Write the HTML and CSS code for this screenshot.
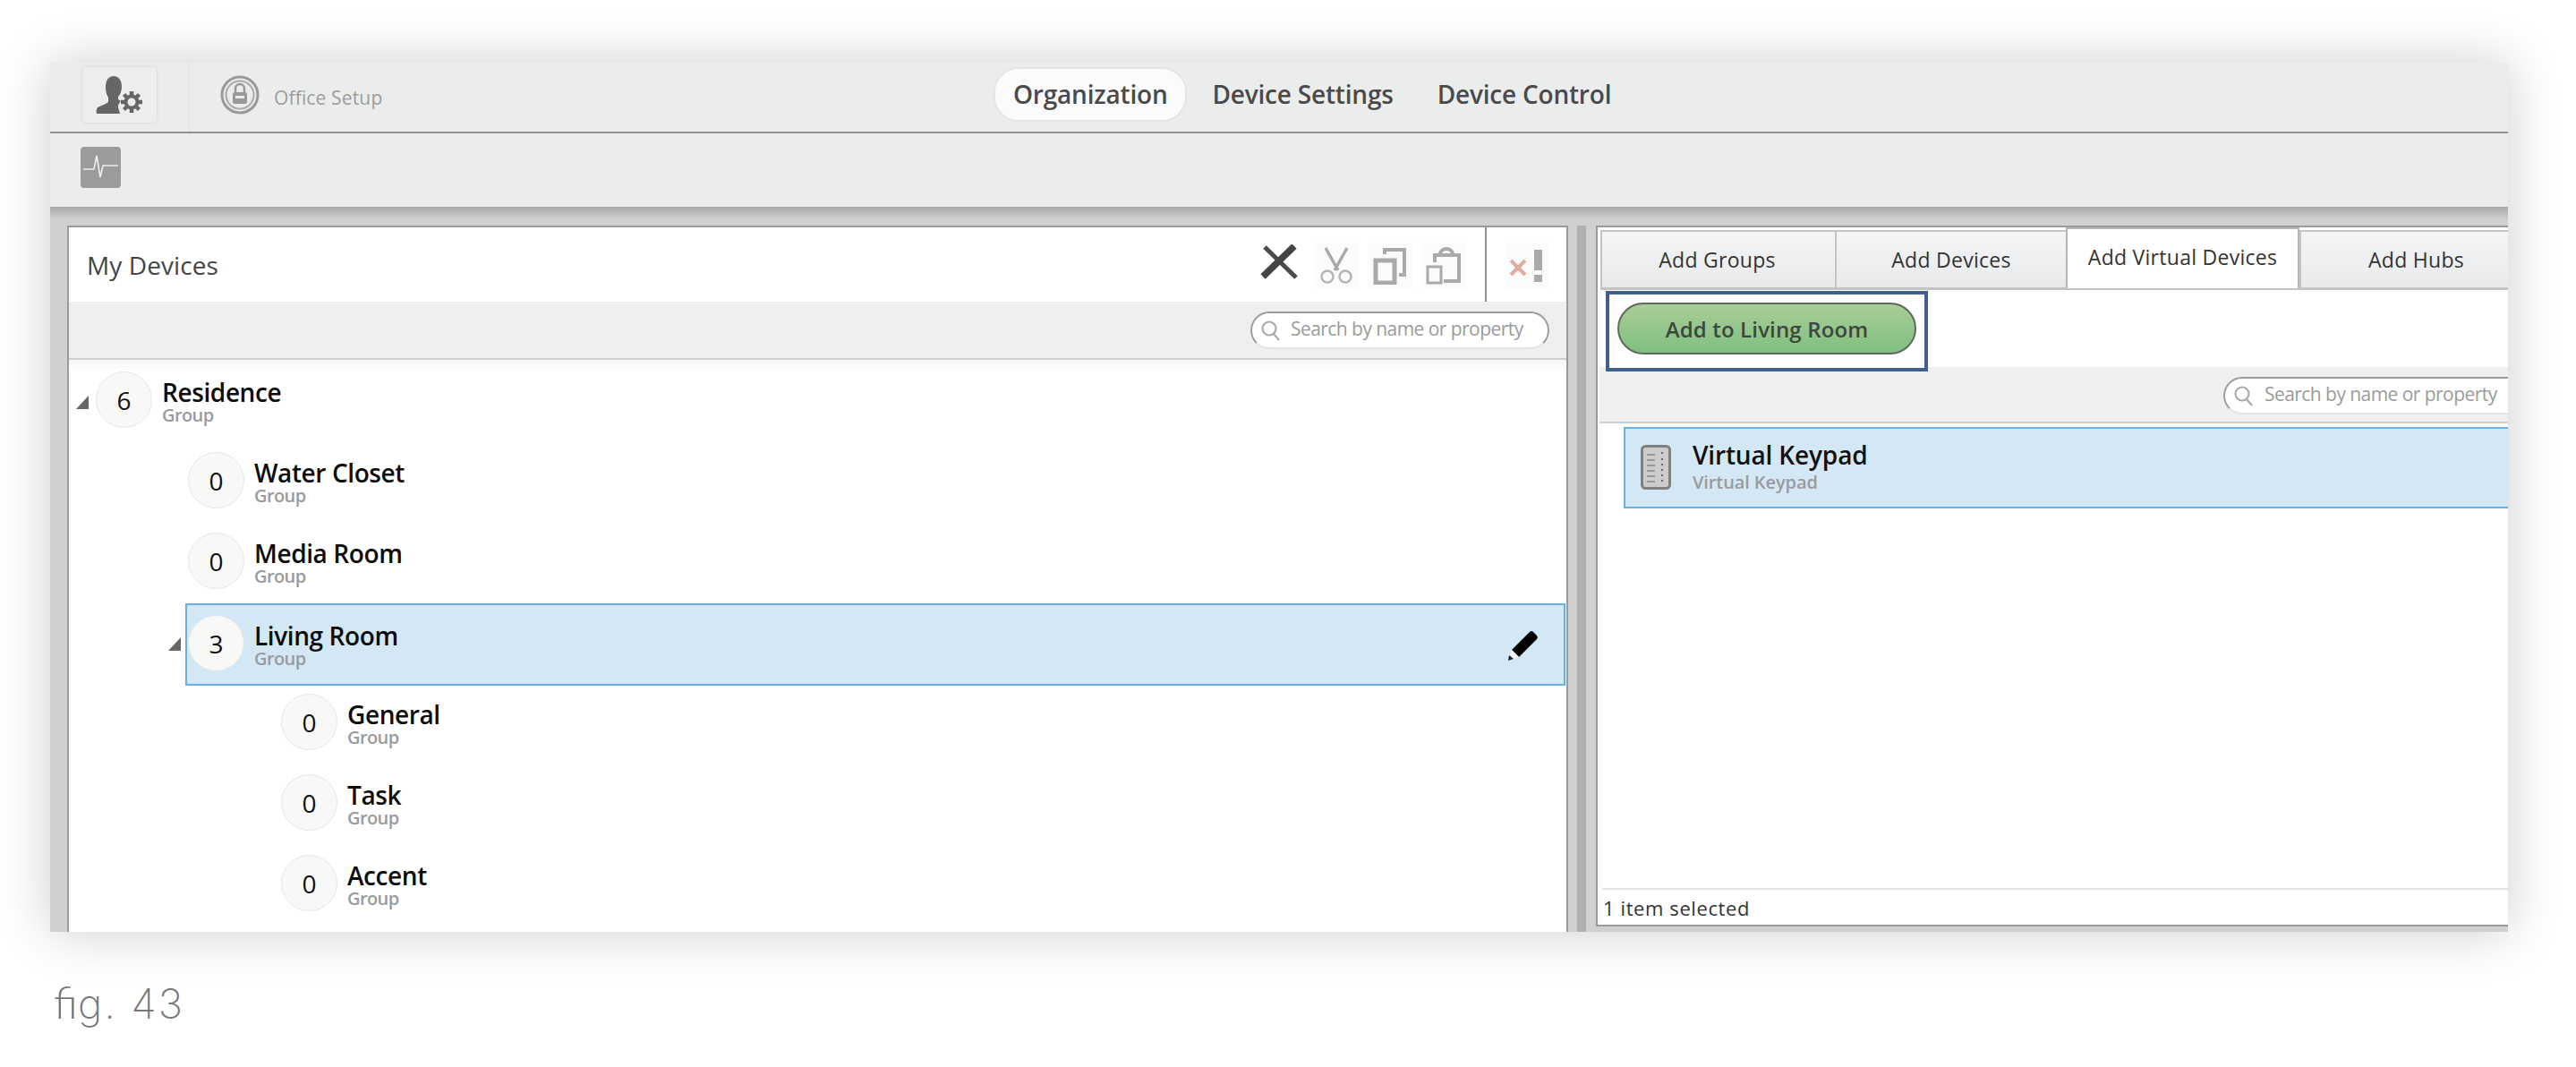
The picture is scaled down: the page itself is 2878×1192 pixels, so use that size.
FILE: index.html
```html
<!DOCTYPE html>
<html lang="en">
<head>
<meta charset="utf-8">
<title>Office Setup</title>
<link rel="stylesheet" href="styles.css">
</head>
<body>
<div class="window">
  <header class="topbar">
    <div class="topleft">
      <button class="userbtn">
        <svg width="52" height="42" viewBox="0 0 52 42"><path fill="#666" d="M20 0c5 0 9 4 9 12 0 5-2 9-4 11v3l3 2c-2 2-3 4-3 6s1 4 2 8H1c-1-4 0-7 3-8 4-2 8-3 10-5v-5c-2-3-3-7-3-12 0-8 4-12 9-12z"/><g transform="translate(40 29)"><path stroke="#666" stroke-width="4.5" d="M0-12V12M-12 0H12M-8.5-8.5 8.5 8.5M8.5-8.5-8.5 8.5"/><circle r="8.5" fill="#666"/><circle r="4.5" fill="#ebeded"/></g></svg>
      </button>
      <div class="office">
        <svg width="44" height="44" viewBox="0 0 44 44"><circle cx="22" cy="22" r="20" fill="none" stroke="#999" stroke-width="3"/><circle cx="22" cy="22" r="15.5" fill="none" stroke="#aaa" stroke-width="2"/><rect x="14" y="19" width="16" height="13" rx="2" fill="#999"/><path d="M17 19v-4a5 5 0 0 1 10 0v4" fill="none" stroke="#999" stroke-width="2.5"/><rect x="17" y="23" width="10" height="3" fill="#ebeded"/></svg>
        <span class="officetext">Office Setup</span>
      </div>
    </div>
    <nav class="nav">
      <span class="navitem active">Organization</span>
      <span class="navitem">Device Settings</span>
      <span class="navitem">Device Control</span>
    </nav>
  </header>
  <div class="toolbar">
    <div class="pulse">
      <svg width="45" height="46" viewBox="0 0 45 46"><path d="M3 25h12l3-15 4 24 3-13h17" fill="none" stroke="#eee" stroke-width="1.6"/></svg>
    </div>
  </div>
  <main class="main">
    <section class="left">
      <div class="lhead">
        <h1 class="ltitle">My Devices</h1>
        <div class="tools">
          <svg class="xicon" width="44" height="40" viewBox="0 0 44 40"><path d="M6 3l35 34" stroke="#4a4a4a" stroke-width="5" fill="none"/><path d="M39 2 4 36" stroke="#444" stroke-width="7.5" fill="none"/></svg>
          <span class="tool"><svg width="38" height="42" viewBox="0 0 38 42"><path d="M7 1l14 25M31 1 17 26" fill="none" stroke="#aaa" stroke-width="3.5"/><circle cx="9" cy="33" r="6.5" fill="none" stroke="#b4b4b4" stroke-width="2.5"/><circle cx="29" cy="33" r="6.5" fill="none" stroke="#b4b4b4" stroke-width="2.5"/></svg></span>
          <span class="tool"><svg width="38" height="42" viewBox="0 0 38 42"><rect x="3" y="15" width="21" height="25" fill="none" stroke="#aaa" stroke-width="5"/><path d="M13 8V3h22v28h-6" fill="none" stroke="#aaa" stroke-width="4"/></svg></span>
          <span class="tool"><svg width="40" height="42" viewBox="0 0 40 42"><rect x="2" y="22" width="15" height="18" fill="none" stroke="#aaa" stroke-width="3"/><path d="M10 17V9h27v29H20" fill="none" stroke="#aaa" stroke-width="4"/><path d="M16 8a7 6 0 0 1 14 0" fill="none" stroke="#aaa" stroke-width="4"/></svg></span>
        </div>
        <div class="errbox">
          <span class="tool"><svg width="40" height="38" viewBox="0 0 40 38"><path d="M2 13l16 16M18 13 2 29" stroke="#e0aca2" stroke-width="4" fill="none"/><rect x="28" y="1" width="9" height="23" fill="#aaa"/><rect x="28" y="29" width="9" height="8" fill="#aaa"/></svg></span>
        </div>
      </div>
      <div class="strip lstrip">
        <label class="search lsearch">
          <svg class="mag" width="22" height="24" viewBox="0 0 22 24"><circle cx="10" cy="10" r="7.5" fill="none" stroke="#aaa" stroke-width="2.2"/><path d="M15 16l6 7" stroke="#aaa" stroke-width="2.2"/></svg>
          <span class="searchtext">Search by name or property</span>
        </label>
      </div>
      <div class="tree">
        <div class="node">
          <i class="arrow"></i>
          <div class="row"><span class="count">6</span><div class="names"><b class="name">Residence</b><small class="type">Group</small></div></div>
        </div>
        <div class="node lvl1">
          <i class="arrow none"></i>
          <div class="row"><span class="count">0</span><div class="names"><b class="name">Water Closet</b><small class="type">Group</small></div></div>
        </div>
        <div class="node lvl1">
          <i class="arrow none"></i>
          <div class="row"><span class="count">0</span><div class="names"><b class="name">Media Room</b><small class="type">Group</small></div></div>
        </div>
        <div class="node lvl1">
          <i class="arrow"></i>
          <div class="row selected"><span class="count">3</span><div class="names"><b class="name">Living Room</b><small class="type">Group</small></div>
            <svg class="pencil" width="36" height="36" viewBox="0 0 36 36"><path d="M26 3a3 3 0 0 1 4 0l4 4a3 3 0 0 1 0 4L14 31 6 23z" fill="#000"/><path d="M6 23l8 8-10 3z" fill="#f4f6f8"/><path d="M2 35l1-6 5 4z" fill="#222"/></svg>
          </div>
        </div>
        <div class="node lvl2">
          <i class="arrow none"></i>
          <div class="row"><span class="count">0</span><div class="names"><b class="name">General</b><small class="type">Group</small></div></div>
        </div>
        <div class="node lvl2">
          <i class="arrow none"></i>
          <div class="row"><span class="count">0</span><div class="names"><b class="name">Task</b><small class="type">Group</small></div></div>
        </div>
        <div class="node lvl2">
          <i class="arrow none"></i>
          <div class="row"><span class="count">0</span><div class="names"><b class="name">Accent</b><small class="type">Group</small></div></div>
        </div>
      </div>
    </section>
    <div class="splitter"><span class="splitbar"></span></div>
    <section class="right">
      <div class="tabs">
        <span class="tab t1">Add Groups</span>
        <span class="tab t2">Add Devices</span>
        <span class="tab t3 on">Add Virtual Devices</span>
        <span class="tab t4">Add Hubs</span>
      </div>
      <div class="actions">
        <div class="callout"><button class="addbtn">Add to Living Room</button></div>
      </div>
      <div class="strip rstrip">
        <label class="search rsearch">
          <svg class="mag" width="22" height="24" viewBox="0 0 22 24"><circle cx="10" cy="10" r="7.5" fill="none" stroke="#aaa" stroke-width="2.2"/><path d="M15 16l6 7" stroke="#aaa" stroke-width="2.2"/></svg>
          <span class="searchtext">Search by name or property</span>
        </label>
      </div>
      <div class="list">
        <div class="item">
          <svg class="keypad" width="34" height="50" viewBox="0 0 34 50"><rect x="1.5" y="1.5" width="31" height="47" rx="4" fill="#ccc" stroke="#808080" stroke-width="3"/><path d="M7 11h9M7 17h9M7 23h9M7 29h9M7 35h9M7 41h9" stroke="#888" stroke-width="1.5"/><path d="M24 8v2M24 15v2M24 21v2M24 27v2M24 33v2M24 39v2" stroke="#666" stroke-width="2"/></svg>
          <div class="names"><b class="iname">Virtual Keypad</b><small class="itype">Virtual Keypad</small></div>
        </div>
      </div>
      <div class="status">1 item selected</div>
    </section>
  </main>
</div>
<p class="caption"><span class="lig">fi</span>g. 43</p>
</body>
</html>
```
FILE: styles.css
```css
* { box-sizing: border-box; }
html, body { margin: 0; padding: 0; background: #fff; height: 100%; overflow: hidden; }
body { font-family: "Open Sans", "Liberation Sans", sans-serif; color: #222; }
.window { width: 2746px; height: 971px; margin: 70px 0 0 56px; background: #ebeded; box-shadow: 0 0 55px rgba(0,0,0,.2); display: flex; flex-direction: column; overflow: hidden; }

.topbar { height: 79px; flex: none; border-bottom: 2px solid #8f9191; display: flex; position: relative; }
.topleft { display: flex; align-items: stretch; }
.userbtn { width: 83px; height: 62px; margin: 5px 0 0 36px; padding: 10px 2px 0 0; border: 0; background: #ecedec; box-shadow: 0 0 3px rgba(0,0,0,.12); border-radius: 3px; display: flex; align-items: flex-start; justify-content: center; }
.office { margin-left: 36px; padding-left: 34px; border-left: 1px solid #e0e2e2; display: flex; align-items: center; gap: 16px; padding-bottom: 5px; }
.officetext { font-size: 21px; color: #9c9c9c; letter-spacing: .15px; margin-top: 5px; }
.nav { position: absolute; left: 1054px; top: 5px; display: flex; align-items: center; gap: 49px; }
.navitem { font-size: 28px; font-weight: 600; color: #4a4a4a; letter-spacing: -.2px; line-height: 61px; }
.navitem.active { background: #fbfbfb; border: 2px solid #e4e6e6; border-radius: 28px; padding: 0 20px; line-height: 57px; margin-right: -21px; }

.toolbar { height: 82px; flex: none; padding: 15px 0 0 34px; }
.pulse { width: 45px; height: 46px; background: #9b9b9b; border-radius: 4px; }
.pulse svg { display: block; }

.main { flex: 1; min-height: 0; display: flex; padding: 21px 0 0 19px; background: linear-gradient(#a9a9a9, #d0d0ce 14px) #d0d0ce; }
.left { width: 1677px; flex: none; background: #fff; border: 2px solid #9a9a9a; border-bottom: 0; display: flex; flex-direction: column; }
.lhead { height: 83px; flex: none; display: flex; align-items: flex-start; }
.ltitle { margin: 0; padding: 23px 0 0 20px; font-size: 28px; line-height: 38px; font-weight: 400; color: #444; letter-spacing: .1px; flex: 1; }
.tools { display: flex; align-items: flex-start; gap: 10px; padding-top: 17px; margin-right: 21px; }
.xicon { margin: 2px 7px 0 0; }
.tool { width: 50px; height: 51px; background: #fbfbfb; display: flex; align-items: center; justify-content: center; }
.errbox { width: 91px; height: 83px; border-left: 2px solid #8f8f8f; padding: 17px 0 0 20px; }

.strip { flex: none; border-bottom: 2px solid #cfd0d0; background: #eef0f0; display: flex; justify-content: flex-end; }
.lstrip { height: 65px; padding: 11px 19px 0 0; }
.search { height: 42px; border: 2px solid #9d9d9d; border-bottom-color: #e4e4e4; border-radius: 21px; background: #fff; display: flex; align-items: center; }
.lsearch { width: 334px; padding-left: 9px; }
.mag { flex: none; margin-right: 13px; }
.lsearch .mag { margin-right: 12px; }
.searchtext { font-size: 21px; color: #9b9b9b; letter-spacing: -.55px; white-space: nowrap; line-height: 30px; margin-top: -4px; }

.tree { flex: 1; min-height: 0; overflow: hidden; padding-top: 2px; background: linear-gradient(#f6f6f6, #fff 14px); }
.node { height: 90px; display: flex; align-items: flex-start; }
.lvl1 { margin-left: 103px; }
.lvl2 { margin-left: 207px; }
.arrow { width: 27px; flex: none; height: 16px; margin-top: 38px; position: relative; }
.arrow::before { content: ""; position: absolute; left: 8px; top: 0; border-style: solid; border-width: 0 0 15px 14px; border-color: transparent transparent #666 transparent; }
.arrow.none::before { display: none; }
.row { flex: 1; height: 90px; padding: 11px 30px 0 3px; margin-right: 1px; display: flex; align-items: flex-start; gap: 11px; }
.row.selected { height: 92px; background: #d3e8f4; border: 2px solid #69b0e2; padding: 11px 28px 0 1px; }
.count { width: 63px; height: 63px; flex: none; border-radius: 50%; background: #f8f8f7; border: 1px solid #e6e6e6; font-size: 28px; color: #111; display: flex; align-items: center; justify-content: center; }
.selected .count { border-color: #dfe6e8; }
.names { display: flex; flex-direction: column; }
.name { font-size: 28px; font-weight: 600; line-height: 32px; color: #0c0c0c; letter-spacing: -.4px; margin-top: 7px; }
.type { font-size: 20px; line-height: 18px; font-weight: 600; color: #9a9aa0; letter-spacing: -.6px; margin-top: 1px; }
.pencil { margin-left: auto; margin-top: 16px; }

.splitter { width: 31px; flex: none; padding-left: 10px; }
.splitbar { display: block; width: 10px; height: 100%; background: #b0b0b0; }

.right { flex: 1; min-width: 0; height: 783px; background: #fff; border: 2px solid #9a9a9a; border-right: 0; display: flex; flex-direction: column; }
.tabs { height: 70px; flex: none; margin-left: 3px; border-bottom: 3px solid #c4c4c4; display: flex; align-items: flex-end; padding-top: 3px; }
.tab { height: 64px; background: linear-gradient(#f4f5f6, #e9eaeb); border-top: 2px solid #c4c4c4; border-left: 2px solid #c4c4c4; font-size: 23px; color: #333; letter-spacing: .27px; display: flex; align-items: center; justify-content: center; }
.t1 { width: 262px; padding-right: 3px; }
.t2 { width: 258px; }
.t3 { width: 261px; }
.t4 { flex: 1; padding-left: 26px; }
.tab.on { height: 68px; background: #fff; border: 2px solid #b5b5b5; border-bottom: 0; margin-bottom: -1px; position: relative; padding-bottom: 4px; }
.actions { height: 86px; flex: none; padding: 1px 0 0 9px; }
.callout { width: 360px; height: 90px; border: 4px solid #3f5f8f; padding: 9px 0 0 9px; position: relative; z-index: 1; background: #fff; }
.addbtn { width: 334px; height: 58px; border: 2px solid #5e6a5e; border-radius: 29px; background: linear-gradient(#aacd98, #7fc080); font: 600 24px "Open Sans", sans-serif; color: #3d473d; letter-spacing: .15px; padding: 0; }
.rstrip { height: 63px; margin-left: 2px; padding-top: 11px; }
.rsearch { width: 340px; margin-right: -22px; padding-left: 9px; }
.list { flex: 1; min-height: 0; padding: 4px 0 0 29px; }
.item { height: 91px; background: #d3e8f4; border: 2px solid #69b0e2; border-right: 0; display: flex; align-items: flex-start; padding: 18px 0 0 17px; gap: 24px; }
.keypad { flex: none; }
.iname { font-size: 28px; font-weight: 600; line-height: 34px; color: #111; letter-spacing: -.15px; margin-top: -6px; }
.itype { font-size: 20px; font-weight: 600; line-height: 22px; color: #9a9a9e; letter-spacing: -.1px; margin-top: 3px; }
.status { height: 41px; flex: none; margin-left: 5px; border-top: 2px solid #e4e4e4; font-size: 22px; line-height: 40px; color: #333; letter-spacing: .6px; padding-left: 1px; white-space: nowrap; }

.caption { margin: 48px 0 0 60px; font: 200 46px/60px "Inter", sans-serif; color: #777; letter-spacing: 2.2px; }
.lig { font: 300 50px/60px "Lato", sans-serif; letter-spacing: 0; }
```
